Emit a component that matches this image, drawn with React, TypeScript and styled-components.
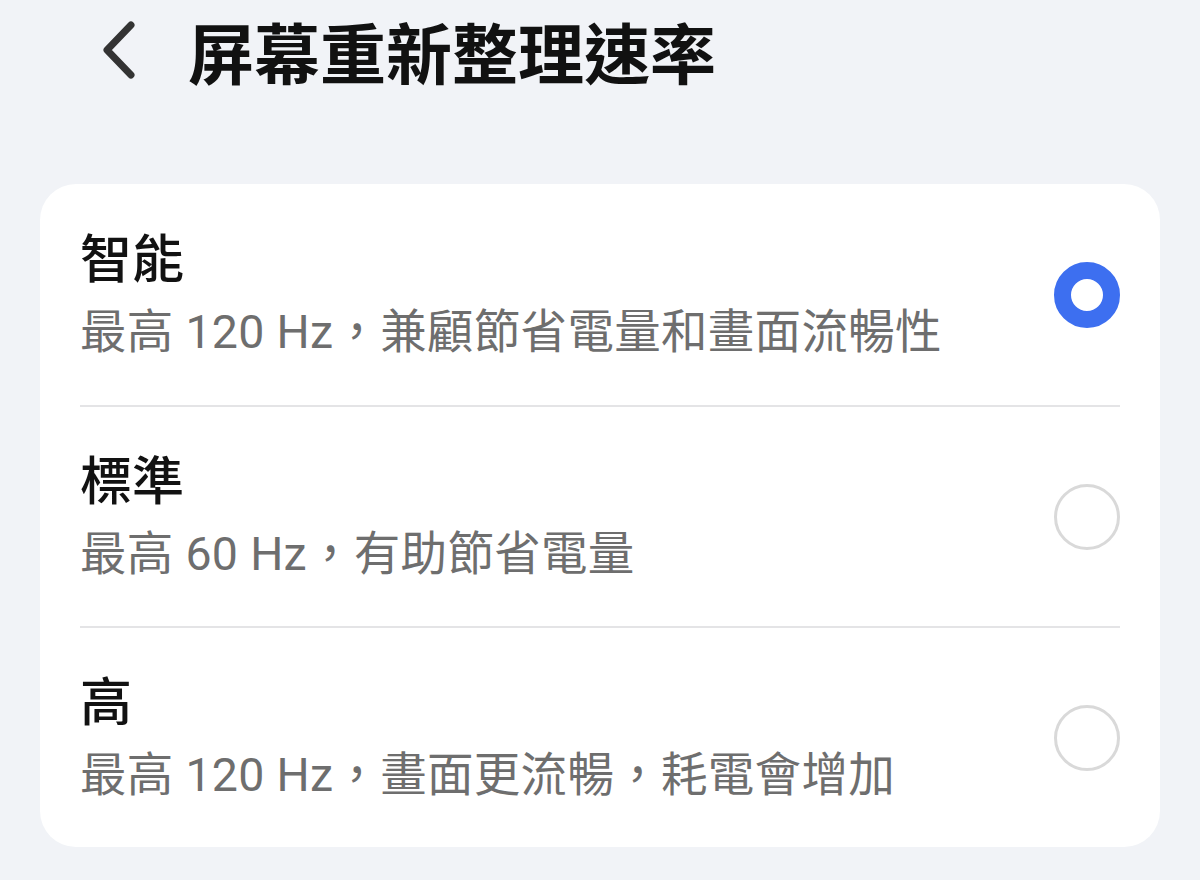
import React, { useState } from "react";
import styled, { createGlobalStyle } from "styled-components";

const GlobalStyle = createGlobalStyle`
  html, body {
    margin: 0;
    padding: 0;
    background: #f1f3f7;
  }
  body {
    font-family: "Roboto", "Noto Sans CJK TC", "Noto Sans", sans-serif;
    -webkit-font-smoothing: antialiased;
  }
`;

const Page = styled.div`
  width: 1200px;
  height: 880px;
  box-sizing: border-box;
  padding: 0 40px;
  background: #f1f3f7;
`;

const Header = styled.header`
  display: flex;
  align-items: center;
  height: 100px;
  padding-left: 60px;
  gap: 50px;
`;

const BackButton = styled.button`
  display: flex;
  align-items: center;
  justify-content: center;
  width: 38px;
  height: 64px;
  padding: 0;
  border: none;
  background: transparent;
  cursor: pointer;
`;

const Title = styled.h1`
  margin: 0;
  font-size: 66px;
  font-weight: 700;
  color: #111111;
  letter-spacing: 0;
`;

const Card = styled.section`
  margin-top: 84px;
  background: #ffffff;
  border-radius: 36px;
  padding: 0 40px;
`;

const Row = styled.div`
  display: flex;
  align-items: center;
  justify-content: space-between;
  height: 221px;
  box-sizing: border-box;
  cursor: pointer;

  & + & {
    border-top: 2px solid #e4e4e6;
  }
`;

const Texts = styled.div`
  display: flex;
  flex-direction: column;
  gap: 12px;
`;

const OptionName = styled.div`
  font-size: 52px;
  line-height: 62px;
  font-weight: 500;
  color: #121212;
`;

const OptionDesc = styled.div`
  font-size: 46.5px;
  line-height: 56px;
  font-weight: 400;
  color: #6e6e6e;
  letter-spacing: 0.3px;
`;

const Radio = styled.span<{ $checked: boolean }>`
  flex: none;
  width: 66px;
  height: 66px;
  box-sizing: border-box;
  border-radius: 50%;
  background: #ffffff;
  border: ${({ $checked }) =>
    $checked ? "17px solid #3d6ff0" : "3px solid #d9d9d9"};
`;

const options = [
  { name: "智能", desc: "最高 120 Hz，兼顧節省電量和畫面流暢性" },
  { name: "標準", desc: "最高 60 Hz，有助節省電量" },
  { name: "高", desc: "最高 120 Hz，畫面更流暢，耗電會增加" },
];

export default function App() {
  const [selected, setSelected] = useState(0);
  return (
    <Page>
      <GlobalStyle />
      <Header>
        <BackButton aria-label="返回">
          <svg width="38" height="64" viewBox="0 0 38 64" fill="none">
            <path
              d="M31 7 L7 32 L31 57"
              stroke="#333333"
              strokeWidth="7"
              strokeLinecap="round"
              strokeLinejoin="round"
            />
          </svg>
        </BackButton>
        <Title>屏幕重新整理速率</Title>
      </Header>
      <Card>
        {options.map((o, i) => (
          <Row key={o.name} onClick={() => setSelected(i)}>
            <Texts>
              <OptionName>{o.name}</OptionName>
              <OptionDesc>{o.desc}</OptionDesc>
            </Texts>
            <Radio $checked={selected === i} />
          </Row>
        ))}
      </Card>
    </Page>
  );
}
